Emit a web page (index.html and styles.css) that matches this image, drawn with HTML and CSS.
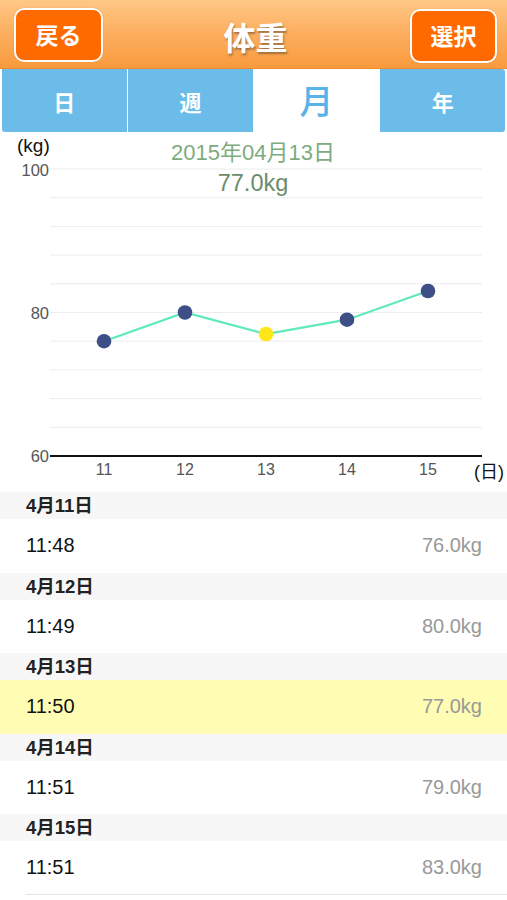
FILE: index.html
```html
<!DOCTYPE html>
<html lang="ja">
<head>
<meta charset="utf-8">
<title>体重</title>
<link rel="stylesheet" href="styles.css">
</head>
<body>
<header class="navbar">
  <button class="nav-btn">戻る</button>
  <h1 class="nav-title">体重</h1>
  <button class="nav-btn nav-btn-right">選択</button>
</header>
<nav class="tabs">
  <div class="tab">日</div>
  <div class="tab">週</div>
  <div class="tab tab-active">月</div>
  <div class="tab">年</div>
</nav>
<section class="chart">
  <svg class="chart-svg" width="507" height="360" viewBox="0 0 507 360">
    <g class="grid">
      <line x1="50" x2="482" y1="37" y2="37"/>
      <line x1="50" x2="482" y1="65.7" y2="65.7"/>
      <line x1="50" x2="482" y1="94.4" y2="94.4"/>
      <line x1="50" x2="482" y1="123.1" y2="123.1"/>
      <line x1="50" x2="482" y1="151.8" y2="151.8"/>
      <line x1="50" x2="482" y1="180.5" y2="180.5"/>
      <line x1="50" x2="482" y1="209.2" y2="209.2"/>
      <line x1="50" x2="482" y1="237.9" y2="237.9"/>
      <line x1="50" x2="482" y1="266.6" y2="266.6"/>
      <line x1="50" x2="482" y1="295.3" y2="295.3"/>
    </g>
    <line class="axis" x1="50" x2="482" y1="324" y2="324"/>
    <text class="unit" x="17" y="20">(kg)</text>
    <text class="ylabel" x="49" y="43.5">100</text>
    <text class="ylabel" x="49" y="186.5">80</text>
    <text class="ylabel" x="49" y="330">60</text>
    <text class="sel-date" x="253" y="28">2015年04月13日</text>
    <text class="sel-value" x="253" y="59">77.0kg</text>
    <polyline class="series" points="104,209.2 185,180.5 266,202 347,187.7 428,159"/>
    <circle class="dot" cx="104" cy="209.2" r="7.3"/>
    <circle class="dot" cx="185" cy="180.5" r="7.3"/>
    <circle class="dot dot-sel" cx="266" cy="202" r="7.3"/>
    <circle class="dot" cx="347" cy="187.7" r="7.3"/>
    <circle class="dot" cx="428" cy="159" r="7.3"/>
    <text class="xlabel" x="104" y="342.5">11</text>
    <text class="xlabel" x="185" y="342.5">12</text>
    <text class="xlabel" x="266" y="342.5">13</text>
    <text class="xlabel" x="347" y="342.5">14</text>
    <text class="xlabel" x="428" y="342.5">15</text>
    <text class="xunit" x="474" y="346">(日)</text>
  </svg>
</section>
<section class="list">
  <div class="list-head">4月11日</div>
  <div class="list-row"><span class="time">11:48</span><span class="weight">76.0kg</span></div>
  <div class="list-head">4月12日</div>
  <div class="list-row"><span class="time">11:49</span><span class="weight">80.0kg</span></div>
  <div class="list-head">4月13日</div>
  <div class="list-row list-row-sel"><span class="time">11:50</span><span class="weight">77.0kg</span></div>
  <div class="list-head">4月14日</div>
  <div class="list-row"><span class="time">11:51</span><span class="weight">79.0kg</span></div>
  <div class="list-head">4月15日</div>
  <div class="list-row list-row-last"><span class="time">11:51</span><span class="weight">83.0kg</span></div>
</section>
</body>
</html>
```
FILE: styles.css
```css
* { box-sizing: border-box; }
html, body {
  margin: 0;
  padding: 0;
  background: #ffffff;
  font-family: "Liberation Sans", "Noto Sans CJK JP", sans-serif;
}
.navbar {
  height: 69px;
  display: grid;
  grid-template-columns: 1fr auto 1fr;
  align-items: start;
  padding: 8px 10px 0 14px;
  background: linear-gradient(to bottom, #ffc886 0%, #fdb062 45%, #f99a3c 100%);
  border-bottom: 1px solid #f08a2a;
}
.nav-btn {
  justify-self: start;
  width: 89px;
  height: 54px;
  margin: 0;
  padding: 0 0 2px 0;
  background: #ff6a00;
  border: 2.5px solid #ffffff;
  border-radius: 10px;
  color: #ffffff;
  font-family: "Noto Sans CJK JP", sans-serif;
  font-weight: 700;
  font-size: 23px;
  line-height: 1;
  box-shadow: 0 0 1px rgba(120, 60, 0, 0.4);
}
.nav-btn-right {
  justify-self: end;
  width: 87px;
  margin-top: 1px;
}
.nav-title {
  margin: 0;
  padding-top: 8px;
  font-family: "Noto Sans CJK JP", sans-serif;
  font-weight: 700;
  font-size: 32px;
  line-height: 40px;
  color: #ffffff;
  text-shadow: 1px 2px 2px rgba(90, 70, 50, 0.55);
}
.tabs {
  display: grid;
  grid-template-columns: repeat(4, 1fr);
  column-gap: 1.5px;
  padding: 0 2px;
  height: 63px;
  background: #ffffff;
}
.tab {
  display: flex;
  align-items: center;
  justify-content: center;
  background: #6bbce9;
  color: #ffffff;
  font-family: "Noto Sans CJK JP", sans-serif;
  font-weight: 700;
  font-size: 22px;
}
.tab:first-child { border-radius: 0 0 0 3px; }
.tab:last-child { border-radius: 0 3px 3px 0; }
.tab-active {
  background: #ffffff;
  color: #5ab3e6;
  font-size: 34px;
  font-weight: 500;
  padding-bottom: 2px;
}
.chart {
  height: 360px;
}
.chart-svg { display: block; }
.grid line { stroke: #ececec; stroke-width: 1; }
.axis { stroke: #111111; stroke-width: 2; }
.unit {
  font-family: "Liberation Sans", sans-serif;
  font-size: 19px;
  fill: #111111;
}
.ylabel {
  font-family: "Liberation Sans", sans-serif;
  font-size: 16.5px;
  fill: #555555;
  text-anchor: end;
}
.xlabel {
  font-family: "Liberation Sans", sans-serif;
  font-size: 16px;
  fill: #555555;
  text-anchor: middle;
}
.xunit {
  font-family: "Liberation Sans", "Noto Sans CJK JP", sans-serif;
  font-size: 18px;
  fill: #111111;
}
.sel-date {
  font-family: "Liberation Sans", "Noto Sans CJK JP", sans-serif;
  font-size: 22px;
  fill: #7eab7e;
  text-anchor: middle;
}
.sel-value {
  font-family: "Liberation Sans", sans-serif;
  font-size: 23.5px;
  fill: #6b8c6b;
  text-anchor: middle;
}
.series {
  fill: none;
  stroke: #5eebb9;
  stroke-width: 2.2;
}
.dot { fill: #3e4f88; }
.dot-sel { fill: #ffe619; }
.list-head {
  height: 27px;
  padding-left: 26px;
  background: #f7f7f7;
  font-family: "Liberation Sans", "Noto Sans CJK JP", sans-serif;
  font-weight: 700;
  font-size: 18.5px;
  line-height: 28px;
  color: #222222;
}
.list-row {
  height: 53.5px;
  display: flex;
  align-items: center;
  justify-content: space-between;
  padding: 0 25px 0 26px;
  background: #ffffff;
  font-size: 20px;
}
.list-row-sel { background: #fffdb3; }
.list-row-last {
  border-bottom: 1px solid #e4e4e4;
  margin-left: 26px;
  padding-left: 0;
}
.time { color: #111111; }
.weight { color: #999999; }
```
